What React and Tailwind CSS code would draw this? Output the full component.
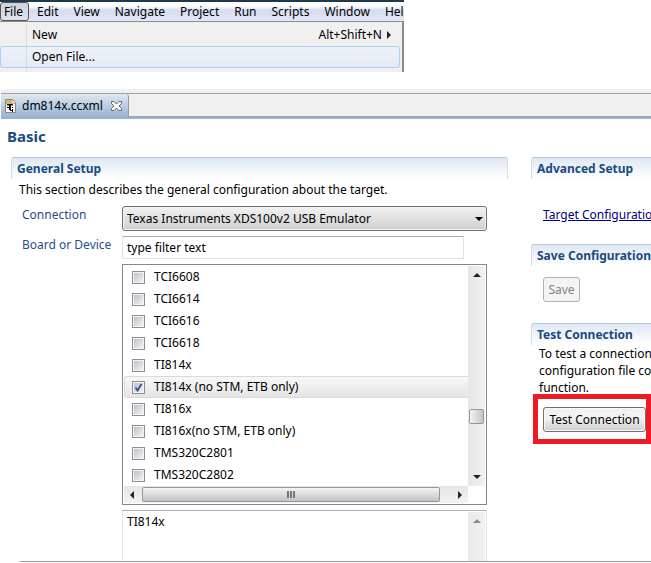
import React, { useState } from 'react';

const MENUS = ['Edit', 'View', 'Navigate', 'Project', 'Run', 'Scripts', 'Window', 'Help'];

const DEVICES = [
  'TCI6608',
  'TCI6614',
  'TCI6616',
  'TCI6618',
  'TI814x',
  'TI814x (no STM, ETB only)',
  'TI816x',
  'TI816x(no STM, ETB only)',
  'TMS320C2801',
  'TMS320C2802',
];

const ARROWS = {
  up: '0,4 8,4 4,0',
  down: '0,0 8,0 4,4',
  left: '4,0 4,8 0,4',
  right: '0,0 0,8 4,4',
};

function Arrow({ dir, className = 'fill-[#222]' }) {
  const vertical = dir === 'up' || dir === 'down';
  return (
    <svg width={vertical ? 8 : 4} height={vertical ? 4 : 8} className={className} aria-hidden="true">
      <polygon points={ARROWS[dir]} />
    </svg>
  );
}

function MenuBar() {
  return (
    <div className="w-[404px] overflow-hidden bg-[#f0f0f0]">
      <nav className="flex h-[21px] items-stretch gap-2 whitespace-nowrap border-t-2 border-[#1f3a4a] bg-linear-to-b from-white from-20% via-[#d6dcee] via-45% to-[#e2e8f6]">
        <button className="w-[29px] shrink-0 rounded-[3px] border border-[#555] bg-linear-to-b from-[#cfd2da] to-[#dfe3ee] pr-[2px] leading-4">
          File
        </button>
        <div className="flex gap-[15px]">
          {MENUS.map((m) => (
            <button key={m} className="shrink-0 leading-4">{m}</button>
          ))}
        </div>
      </nav>
      <div className="h-[51px] border-t border-r-2 border-[#8c8c8c] pt-[2px]">
        <button className="flex h-[22px] w-full items-center">
          <span className="h-full w-[27px] border-r border-[#dcdcdc]" />
          <span className="flex-1 pl-[5px] text-left">New</span>
          <span>Alt+Shift+N</span>
          <span className="pr-[11px] pl-[5px]"><Arrow dir="right" /></span>
        </button>
        <button className="flex h-[22px] w-[400px] items-center rounded-[3px] border border-[#aecff7] bg-linear-to-b from-[#eef1f7] to-[#e4eaf5]">
          <span className="h-full w-[26px] border-r border-[#d5dae4]" />
          <span className="pl-[5px]">Open File...</span>
        </button>
        <div className="h-1 w-[27px] border-r border-[#dcdcdc]" />
      </div>
    </div>
  );
}

function FileIcon() {
  return (
    <svg width="11" height="14" viewBox="0 0 11 14" aria-hidden="true">
      <path d="M.5.5h7l3 3v10H.5z" fill="#fff" stroke="#8a8672" />
      <path d="M1 1h6.500v2.500H10V5H1z" fill="#d9b56e" />
      <path d="M2 5h6v1.500H2zM4 6h2v5H4zM2 8h2v1H2zM7 8h1v1H7zM7 10h1v3H7zM5 11h2v1H5z" fill="#111" />
    </svg>
  );
}

function CloseIcon() {
  return (
    <svg width="11" height="10" viewBox="0 0 11 10" aria-hidden="true">
      <path
        d="M.5.5h2.500l2.500 2.500L8 .5h2.500v2L8 5l2.500 2.500v2H8L5.500 7 3 9.500H.5v-2L3 5 .5 2.500z"
        fill="#fff"
        stroke="#666"
      />
    </svg>
  );
}

function EditorTabs() {
  return (
    <div className="ml-px border-b-2 border-[#99b4d1] bg-[#f0f0f0] pt-1">
      <div className="flex h-6 border-y border-[#a0a0a0]">
        <div className="-mb-px flex w-[128px] items-center rounded-tr-[3px] border-r border-[#8f9baa] bg-linear-to-b from-[#dfe8f2] to-[#99b4d1] pl-1">
          <FileIcon />
          <span className="pl-[6px]">dm814x.ccxml</span>
          <button aria-label="Close" className="ml-2"><CloseIcon /></button>
        </div>
      </div>
    </div>
  );
}

function SectionTitle({ children, open }) {
  return (
    <h2
      className={`h-[22px] overflow-hidden whitespace-nowrap border-t border-l border-t-[#b5c6da] border-l-[#d3deea] bg-linear-to-b from-[#dfe8f3] to-white pl-[5px] leading-[22px] font-bold text-[#1a4b80] ${
        open ? 'rounded-tl-[3px]' : 'rounded-t-[3px] border-r border-r-[#d3deea]'
      }`}
    >
      {children}
    </h2>
  );
}

function DeviceRow({ name, checked, onChange }) {
  return (
    <label
      className={`flex h-[22px] items-center gap-[9px] pl-2 ${
        checked
          ? 'rounded-l-[3px] border border-r-0 border-[#d9d9d9] bg-linear-to-b from-[#f8f8f8] to-[#e5e5e5] pl-[7px]'
          : ''
      }`}
    >
      <span className="grid">
        <input
          type="checkbox"
          checked={checked}
          onChange={onChange}
          className="col-start-1 row-start-1 size-[13px] appearance-none border border-[#8e8f8f] bg-linear-to-br from-[#b4bac6] to-[#fafafa] outline outline-1 -outline-offset-2 outline-[#f4f4f4]"
        />
        {checked && (
          <svg width="13" height="13" className="pointer-events-none z-10 col-start-1 row-start-1" aria-hidden="true">
            <path d="M3.500 6.500 5.500 9.500 9.500 3" fill="none" stroke="#3c5598" strokeWidth="2" />
          </svg>
        )}
      </span>
      <span className="leading-4">{name}</span>
    </label>
  );
}

function DeviceList() {
  const [selected, setSelected] = useState('TI814x (no STM, ETB only)');
  return (
    <div className="border border-[#828790] p-px">
      <div className="flex">
        <div className="min-w-0 flex-1">
          {DEVICES.map((d) => (
            <DeviceRow key={d} name={d} checked={d === selected} onChange={() => setSelected(d)} />
          ))}
        </div>
        <div className="flex w-[17px] flex-col items-center bg-linear-to-r from-[#e6e6e6] to-[#f2f2f2] py-[7px]">
          <Arrow dir="up" />
          <div className="flex-1" />
          <div className="h-[15px] w-[15px] rounded-[2px] border border-[#979797] bg-linear-to-r from-[#f4f4f4] to-[#c4c5ca]" />
          <div className="h-[51px]" />
          <Arrow dir="down" />
        </div>
      </div>
      <div className="mr-[17px] flex h-[17px] items-center bg-linear-to-b from-[#e6e6e6] to-[#f2f2f2] pl-[6px]">
        <Arrow dir="left" />
        <div className="ml-2 flex h-[15px] w-[298px] items-center justify-center gap-px rounded-[2px] border border-[#979797] bg-linear-to-b from-[#f4f4f4] via-[#dcdcde] to-[#c0c1c5]">
          <i className="h-[7px] w-[2px] bg-[#777]" />
          <i className="h-[7px] w-[2px] bg-[#777]" />
          <i className="h-[7px] w-[2px] bg-[#777]" />
        </div>
        <span className="ml-[18px]"><Arrow dir="right" /></span>
      </div>
    </div>
  );
}

function GeneralSetup() {
  return (
    <section className="w-[497px] shrink-0">
      <SectionTitle>General Setup</SectionTitle>
      <p className="pt-[2px] pl-2 leading-[18px]">
        This section describes the general configuration about the target.
      </p>
      <div className="mt-[7px] grid grid-cols-[100px_1fr] pr-[21px] pl-[11px]">
        <label htmlFor="connection" className="text-[#1f4f8a] leading-[18px]">Connection</label>
        <div className="grid items-center">
          <select
            id="connection"
            className="col-start-1 row-start-1 h-[25px] w-full appearance-none rounded-[3px] border border-[#707070] bg-linear-to-b from-[#f2f2f2] to-[#cfcfcf] pl-1 inset-ring inset-ring-[#f5f5f5]"
          >
            <option>Texas Instruments XDS100v2 USB Emulator</option>
          </select>
          <span className="pointer-events-none col-start-1 row-start-1 mr-1 justify-self-end">
            <Arrow dir="down" className="fill-black" />
          </span>
        </div>
        <label htmlFor="device" className="pt-[5px] leading-[18px] whitespace-nowrap text-[#1f4f8a]">Board or Device</label>
        <div className="pt-[5px] pr-[23px]">
          <input
            id="device"
            defaultValue="type filter text"
            className="block h-[23px] w-full border border-[#e2e3ea] border-t-[#abadb3] pl-1"
          />
        </div>
        <div className="col-start-2 pt-[5px]"><DeviceList /></div>
        <div className="col-start-2 mt-[5px] flex border border-b-0 border-[#e2e3ea] border-t-[#abadb3] pt-px pr-px">
          <textarea
            aria-label="Description"
            defaultValue="TI814x"
            className="block h-[49px] min-w-0 flex-1 resize-none overflow-hidden py-0 pl-1 leading-[19px]"
          />
          <div className="flex w-[17px] flex-col items-center bg-linear-to-r from-[#e9e9e9] to-[#f2f2f2] pt-[7px]">
            <Arrow dir="up" className="fill-[#888]" />
          </div>
        </div>
      </div>
    </section>
  );
}

function SideColumn() {
  return (
    <div className="min-w-0 flex-1 overflow-hidden whitespace-nowrap">
      <section className="h-[87px]">
        <SectionTitle open>Advanced Setup</SectionTitle>
        <a href="#target" className="mt-[27px] ml-3 block leading-[18px] text-[#000080] underline">Target Configuration</a>
      </section>
      <section className="h-[79px]">
        <SectionTitle open>Save Configuration</SectionTitle>
        <button disabled className="mt-[11px] ml-3 h-[25px] w-[37px] rounded-[3px] border border-[#adb2b5] bg-[#f4f4f4] text-[#838383]">
          Save
        </button>
      </section>
      <section>
        <SectionTitle open>Test Connection</SectionTitle>
        <p className="h-[49px] pl-2 leading-[17px]">
          To test a connection
          <br />
          configuration file contents
          <br />
          function.
        </p>
        <div className="ml-[2px] flex h-[50px] items-center border-5 border-[#ed1c24] pl-[5px]">
          <button className="h-[25px] w-[103px] shrink-0 rounded-[3px] border border-[#707070] bg-linear-to-b from-[#f2f2f2] from-45% to-[#cfcfcf] leading-[23px] inset-ring inset-ring-[#f8f8f8]">
            Test Connection
          </button>
        </div>
      </section>
    </div>
  );
}

export default function App() {
  return (
    <div className="overflow-hidden bg-white font-['Noto_Sans','Open_Sans',sans-serif] text-[12px] leading-4 text-black">
      <MenuBar />
      <main className="mt-[17px]">
        <EditorTabs />
        <h1 className="pt-[6px] pl-[7px] text-[15px] leading-[22px] font-bold text-[#1a4b80]">Basic</h1>
        <div className="mt-[10px] flex gap-[23px] pl-[11px]">
          <GeneralSetup />
          <SideColumn />
        </div>
        <div className="ml-5 border-t border-[#999]" />
      </main>
    </div>
  );
}
